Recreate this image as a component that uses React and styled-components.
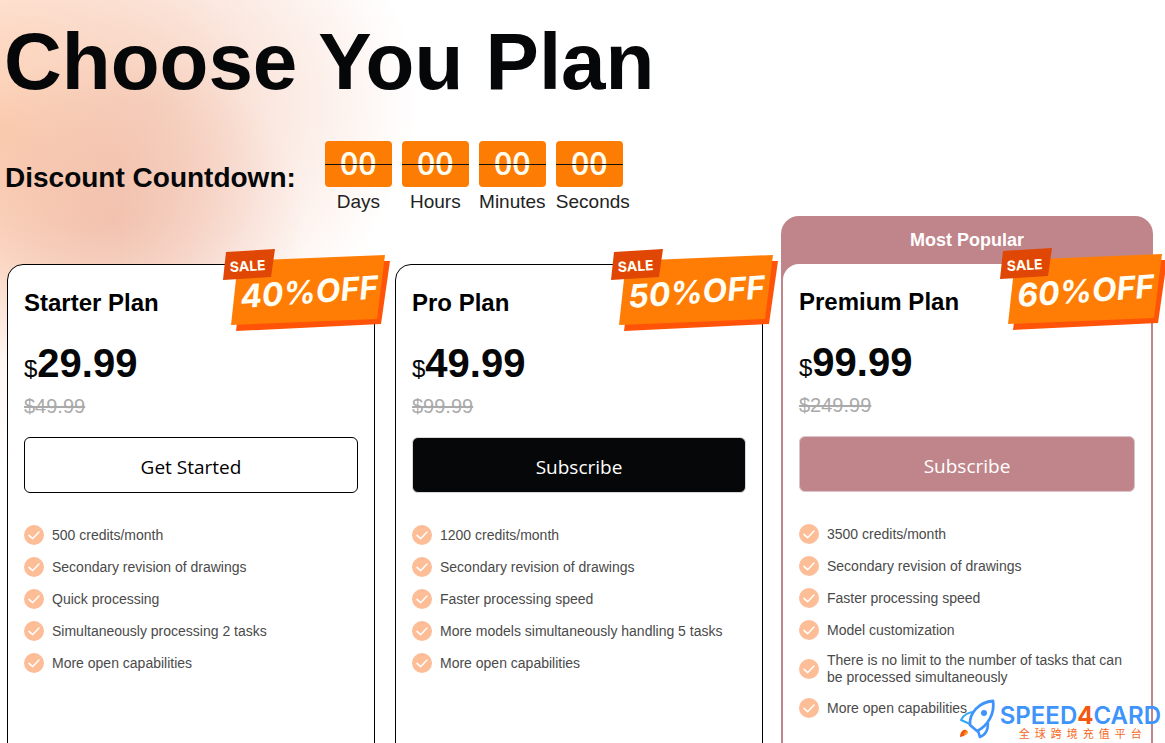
import styled, { createGlobalStyle } from 'styled-components';

const GlobalStyle = createGlobalStyle`
    * {
        box-sizing: border-box;
    }

    body {
        margin: 0;
        background-color: #ffffff;
        color: #050708;
        font-family: "Liberation Sans", Arial, sans-serif;
    }

    h1, h2, p, ul {
        margin: 0;
        padding: 0;
    }
`;

const Page = styled.main`
    position: relative;
    min-height: 100vh;
    padding: 16px 14px 0 7px;
    overflow: hidden;
    background:
        radial-gradient(ellipse 190px 170px at 115px 220px, rgba(226, 150, 125, 0.38) 0%, rgba(230, 160, 138, 0.26) 45%, rgba(240, 190, 175, 0) 100%),
        radial-gradient(ellipse 260px 230px at 160px 100px, rgba(240, 196, 178, 0.5) 0%, rgba(244, 208, 194, 0.36) 45%, rgba(255, 240, 235, 0) 100%),
        radial-gradient(ellipse 400px 340px at 0 130px, rgba(255, 200, 162, 0.9) 0%, rgba(255, 208, 178, 0.72) 30%, rgba(255, 230, 218, 0.34) 68%, rgba(255, 255, 255, 0) 100%),
        #ffffff;
`;

const Title = styled.h1`
    font-size: 80px;
    line-height: 92px;
    font-weight: 700;
    margin-left: -3px;
`;

const Countdown = styled.section`
    display: flex;
    align-items: flex-start;
    gap: 29px;
    margin-top: 33px;
    height: 75px;
`;

const CountdownTitle = styled.h2`
    font-size: 28px;
    line-height: 32px;
    padding-top: 21px;
    margin-left: -2px;
`;

const Units = styled.div`
    display: flex;
    gap: 10px;
`;

const Unit = styled.div`
    width: 67px;
    text-align: center;
    white-space: nowrap;
`;

const Digits = styled.div`
    position: relative;
    height: 46px;
    border-radius: 4px;
    background-color: #fd7c04;
    color: #fffdf0;
    font-family: "Open Sans", "Noto Sans", sans-serif;
    font-size: 32px;
    font-weight: 600;
    line-height: 43px;

    &::after {
        content: "";
        position: absolute;
        left: 0;
        right: 0;
        top: 23px;
        height: 1px;
        background-color: #101010;
    }
`;

const UnitLabel = styled.div`
    font-size: 19px;
    line-height: 22px;
    margin-top: 4px;
    color: #222222;
`;

const Plans = styled.section`
    display: grid;
    grid-template-columns: repeat(3, minmax(0, 1fr));
    gap: 20px;
`;

const PlanColumn = styled.div`
    display: flex;
    flex-direction: column;
    margin: ${props => props.$popular ? '0 -2px' : '48px 0 0'};
    padding: ${props => props.$popular ? '0 2px' : '0'};
    border-radius: 18px 18px 0 0;
    background-color: ${props => props.$popular ? '#bf858a' : 'transparent'};
`;

const Popular = styled.p`
    height: 48px;
    color: #ffffff;
    font-size: 18px;
    font-weight: 700;
    line-height: 48px;
    text-align: center;
`;

const Card = styled.article`
    position: relative;
    flex: 1;
    padding: 24px 16px 48px;
    background-color: #ffffff;
    border: ${props => props.$popular ? '0' : '1px solid #000000'};
    border-radius: 16px 16px 0 0;
`;

const Sale = styled.svg`
    position: absolute;
    top: -16px;
    right: -16px;
    width: 167px;
    height: 84px;
`;

const PlanName = styled.h2`
    font-size: 24px;
    line-height: 28px;
    color: #000000;
`;

const Price = styled.p`
    margin-top: 23px;
    font-size: 24px;
    line-height: 46px;

    strong {
        font-size: 40px;
    }
`;

const OldPrice = styled.p`
    margin-top: 3px;
    color: #aaaaaa;
    font-size: 20px;
    line-height: 22px;
    text-decoration: line-through;
`;

const Botao = styled.button`
    display: block;
    width: 100%;
    height: 56px;
    margin-top: 20px;
    padding: 4px 0 0;
    border: 1px solid ${props => props.$border};
    border-radius: 6px;
    background-color: ${props => props.$background};
    color: ${props => props.$color};
    font-family: "Open Sans", "Noto Sans", sans-serif;
    font-size: 19px;
    line-height: 26px;
    cursor: pointer;
`;

const Features = styled.ul`
    display: flex;
    flex-direction: column;
    gap: 12px;
    margin-top: 32px;
    list-style: none;
`;

const Feature = styled.li`
    display: flex;
    align-items: center;
    gap: 8px;
    min-height: 20px;
    color: #4a4a4a;
    font-size: 14px;
    line-height: 17px;
`;

const Check = styled.svg`
    width: 20px;
    height: 20px;
    flex: none;
`;

const Brand = styled.div`
    position: absolute;
    right: 4px;
    top: 699px;
    display: flex;
    align-items: flex-start;
    gap: 3px;
`;

const Rocket = styled.svg`
    width: 40px;
    height: 42px;
`;

const BrandName = styled.div`
    padding-top: 6px;
    color: #3f94fb;
    font-family: Inter, sans-serif;
    font-size: 24px;
    font-weight: 600;
    line-height: 22px;

    b {
        color: #f4570f;
        font-weight: 700;
    }
`;

const BrandLine = styled.div`
    display: flex;
    justify-content: center;
    gap: 5px;
    color: #f4691f;
    font-family: "Noto Sans CJK SC", sans-serif;
    font-size: 11px;
    font-weight: 400;
    line-height: 12px;
`;

const units = ['Days', 'Hours', 'Minutes', 'Seconds'];

const plans = [
    {
        name: 'Starter Plan',
        price: '29.99',
        oldPrice: '$49.99',
        sale: '40%OFF',
        action: 'Get Started',
        colors: { $background: '#ffffff', $color: '#000000', $border: '#000000' },
        features: [
            '500 credits/month',
            'Secondary revision of drawings',
            'Quick processing',
            'Simultaneously processing 2 tasks',
            'More open capabilities',
        ],
    },
    {
        name: 'Pro Plan',
        price: '49.99',
        oldPrice: '$99.99',
        sale: '50%OFF',
        action: 'Subscribe',
        colors: { $background: '#050708', $color: '#ffffff', $border: '#d8d8d8' },
        features: [
            '1200 credits/month',
            'Secondary revision of drawings',
            'Faster processing speed',
            'More models simultaneously handling 5 tasks',
            'More open capabilities',
        ],
    },
    {
        name: 'Premium Plan',
        price: '99.99',
        oldPrice: '$249.99',
        sale: '60%OFF',
        popular: true,
        action: 'Subscribe',
        colors: { $background: '#bf858a', $color: '#ffffff', $border: '#dcc4c6' },
        features: [
            '3500 credits/month',
            'Secondary revision of drawings',
            'Faster processing speed',
            'Model customization',
            'There is no limit to the number of tasks that can be processed simultaneously',
            'More open capabilities',
        ],
    },
];

function SaleBadge({ text }) {
    return (
        <Sale viewBox="0 0 167 84">
            <path d="M14 74 L160 12 L167 12 L158 75 L13 82 Z" fill="#ff5308" />
            <path d="M15 12 L162 6 L154 70 L8 76 Z" fill="#ff7d05" />
            <path d="M3 3 L52 0 L48 28 L0 31 Z" fill="#e04604" />
            <g fill="#fffef5" fontFamily="Inter, sans-serif">
                <text x="7" y="23" fontSize="14" fontWeight="700" transform="rotate(-3 7 23)">SALE</text>
                <text x="18" y="59" fontSize="32" fontWeight="700" fontStyle="italic" transform="rotate(-4 18 59)">{text}</text>
            </g>
        </Sale>
    );
}

function Plan({ plan }) {
    return (
        <PlanColumn $popular={plan.popular}>
            {plan.popular && <Popular>Most Popular</Popular>}
            <Card $popular={plan.popular}>
                <SaleBadge text={plan.sale} />
                <PlanName>{plan.name}</PlanName>
                <Price>$<strong>{plan.price}</strong></Price>
                <OldPrice>{plan.oldPrice}</OldPrice>
                <Botao type="button" {...plan.colors}>{plan.action}</Botao>
                <Features>
                    {plan.features.map(feature => (
                        <Feature key={feature}>
                            <Check viewBox="0 0 20 20">
                                <circle cx="10" cy="10" r="10" fill="#fdbd97" />
                                <path d="M5 10.3 L8.6 13.7 L15 7" fill="none" stroke="#fff" strokeWidth="1.6" strokeLinecap="round" />
                            </Check>
                            {feature}
                        </Feature>
                    ))}
                </Features>
            </Card>
        </PlanColumn>
    );
}

function SpeedCard() {
    return (
        <Brand>
            <Rocket viewBox="0 0 40 42">
                <path d="M18 13 C12 13 7 15 4 21 L13 25" fill="#fff" stroke="#35a8f5" strokeWidth="2" strokeLinejoin="round" />
                <path d="M21 32 L23 38 C29 36 31 31 31 24" fill="#fff" stroke="#3f94fb" strokeWidth="2.6" strokeLinejoin="round" />
                <path d="M13 26 C12 14 22 3 36 2 C38 14 31 27 20 32 Z" fill="#fff" stroke="#3f94fb" strokeWidth="2.8" strokeLinejoin="round" />
                <circle cx="27" cy="14" r="3" fill="#3f94fb" />
                <path d="M3 38 C3 33 6 30 9 31 C13 33 9 37 3 38 Z" fill="#f4570f" />
                <path d="M7 36 C7 33 9 31 11 33 C11 35 9 36 7 36 Z" fill="#ff9a1f" />
            </Rocket>
            <div>
                <BrandName>SPEED<b>4</b>CARD</BrandName>
                <BrandLine>
                    {[...'全球跨境充值平台'].map(char => <span key={char}>{char}</span>)}
                </BrandLine>
            </div>
        </Brand>
    );
}

function App() {
    return (
        <Page>
            <GlobalStyle />
            <Title>Choose You Plan</Title>
            <Countdown>
                <CountdownTitle>Discount Countdown:</CountdownTitle>
                <Units>
                    {units.map(unit => (
                        <Unit key={unit}>
                            <Digits>00</Digits>
                            <UnitLabel>{unit}</UnitLabel>
                        </Unit>
                    ))}
                </Units>
            </Countdown>
            <Plans>
                {plans.map(plan => <Plan key={plan.name} plan={plan} />)}
            </Plans>
            <SpeedCard />
        </Page>
    );
}

export default App;
